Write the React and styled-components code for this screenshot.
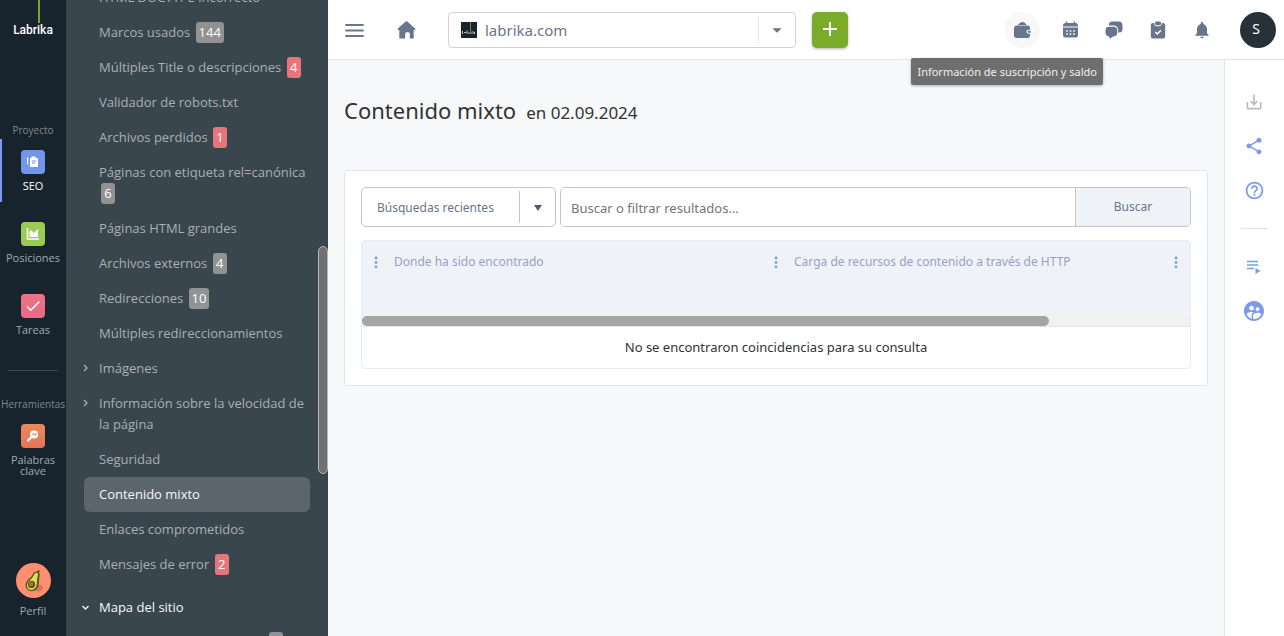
import React from "react";
import styled, { createGlobalStyle, css } from "styled-components";
import {
  MdSaveAlt,
  MdShare,
  MdHelpOutline,
  MdSupervisedUserCircle,
  MdNotifications,
  MdArrowDropDown,
  MdCheck,
} from "react-icons/md";

const Global = createGlobalStyle`
  *, *::before, *::after { box-sizing: border-box; }
  body {
    margin: 0;
    background: #f6f8fa;
    font-family: "Noto Sans", "Open Sans", sans-serif;
    font-size: 13px;
    color: #333;
  }
  button, input, select { font: inherit; margin: 0; }
  a { color: inherit; text-decoration: none; }
  svg { display: block; flex: none; }
`;

const Page = styled.div`
  display: grid;
  grid-template-columns: 66px 262px minmax(0, 1fr);
  min-height: 100vh;
`;

/* ---- project rail ---- */

const Rail = styled.nav`
  display: flex;
  flex-direction: column;
  height: 100vh;
  padding-bottom: 16px;
  background: #17242e;
  font-family: "Open Sans", "Noto Sans", sans-serif;
  font-size: 11px;
  color: #a3a9ae;
`;

const Logo = styled.a`
  display: flex;
  flex-direction: column;
  align-items: center;
  width: 42px;
  height: 43px;
  margin: 0 auto 78px;
  color: #fff;
  font: 500 12px/14px Roboto, sans-serif;
  &::before {
    content: "";
    width: 2px;
    height: 23px;
    margin-left: 12px;
    background: #7da628;
  }
`;

const RailHeading = styled.span`
  align-self: center;
  line-height: 18px;
  font-size: 10px;
  color: #84868a;
`;

const RailItem = styled.a`
  display: flex;
  flex-direction: column;
  align-items: center;
  gap: 6px;
  height: 63px;
  margin-bottom: 9px;
  padding-top: 11px;
  line-height: 11px;
  text-align: center;
  border-left: 2px solid transparent;
  border-right: 2px solid transparent;
  ${(p) => p.$active && css`
    color: #fff;
    border-left-color: #7b9bf0;
  `}
`;

const Tile = styled.span`
  display: flex;
  align-items: center;
  justify-content: center;
  width: 24px;
  height: 24px;
  border-radius: 4px;
  background: ${(p) => p.$fill};
  color: #fff;
`;

const RailRule = styled.hr`
  width: 50px;
  margin: 15px auto 24px;
  border: 0;
  border-top: 1px solid #43464d;
`;

const Profile = styled.a`
  display: flex;
  flex-direction: column;
  align-items: center;
  gap: 4px;
  margin-top: auto;
  line-height: 18px;
`;

/* ---- section menu ---- */

const Menu = styled.nav`
  display: flex;
  height: 100vh;
  overflow: hidden;
  background: #3a464e;
  font-family: "Open Sans", "Noto Sans", sans-serif;
  color: #a9afb2;
`;

const MenuList = styled.ul`
  flex: 1;
  margin: -20px 8px 0 18px;
  padding: 0;
  list-style: none;
`;

const MenuItem = styled.li`
  margin-top: ${(p) => (p.$group ? "8px" : "0")};
`;

const MenuLink = styled.a`
  display: grid;
  grid-template-columns: 15px minmax(0, 1fr);
  align-items: start;
  padding: 7px 0;
  line-height: 21px;
  border-radius: 6px;
  ${(p) => p.$bright && css`color: #f5f7f8;`}
  ${(p) => p.$active && css`
    color: #f5f7f8;
    background: #5a666b;
  `}
  & > svg { margin: 5px 0 0 -4px; }
`;

const Badge = styled.span`
  display: inline-block;
  min-width: 14px;
  height: 21px;
  margin-left: ${(p) => (p.$far ? "170px" : "2px")};
  padding: 0 3px;
  border-radius: 3px;
  vertical-align: top;
  text-align: center;
  background: ${(p) => (p.$alert ? "#e8757c" : "#919293")};
  color: #fff;
`;

const ScrollTrack = styled.div`
  width: 10px;
  padding-top: 246px;
  background: #3a464e;
`;

const ScrollThumb = styled.div`
  height: 228px;
  border: 1px solid #b7b4b8;
  border-radius: 5px;
  background: #707073;
`;

/* ---- top bar ---- */

const Workspace = styled.div`
  display: flex;
  flex-direction: column;
  min-width: 0;
`;

const TopBar = styled.header`
  display: flex;
  align-items: center;
  height: 60px;
  padding: 0 8px 0 16px;
  background: #fff;
  border-bottom: 1px solid #e4e1e8;
  color: #69758c;
`;

const PlainButton = styled.button`
  display: flex;
  align-items: center;
  justify-content: center;
  padding: 0;
  border: 0;
  background: none;
  color: inherit;
  cursor: pointer;
`;

const HomeLink = styled.a`
  margin: 0 32px;
`;

const SitePicker = styled.label`
  display: flex;
  align-items: center;
  gap: 8px;
  flex: 0 1 348px;
  height: 36px;
  padding-left: 12px;
  border: 1px solid #d3d1df;
  border-radius: 4px;
`;

const BareSelect = styled.select`
  appearance: none;
  flex: 1;
  min-width: 0;
  height: 100%;
  padding: 0;
  border: 0;
  outline: 0;
  background: none;
  color: #69758c;
  font-size: ${(p) => (p.$large ? "15px" : "12px")};
`;

const PickerArrow = styled.span`
  display: flex;
  align-items: center;
  justify-content: center;
  width: ${(p) => p.$width}px;
  height: ${(p) => p.$height}px;
  border-left: 1px solid ${(p) => p.$line};
  color: ${(p) => p.$ink};
`;

const AddButton = styled(PlainButton)`
  width: 36px;
  height: 36px;
  margin-left: 16px;
  border-radius: 5px;
  background: #7aab2b;
  color: #fff;
  box-shadow: 0 1px 3px rgba(0, 0, 0, 0.3);
`;

const Actions = styled.div`
  display: flex;
  align-items: center;
  gap: 8px;
  margin-left: auto;
`;

const ActionButton = styled(PlainButton)`
  width: 36px;
  height: 36px;
  border-radius: 50%;
  background: ${(p) => (p.$hovered ? "#f8f8f9" : "none")};
`;

const TipAnchor = styled.div`
  position: relative;
  margin-right: 4px;
`;

const Tooltip = styled.div`
  position: absolute;
  z-index: 2;
  top: 46px;
  right: -63px;
  padding: 0 6px;
  line-height: 27px;
  font-size: 11px;
  white-space: nowrap;
  border-radius: 2px;
  background: #6e6e6e;
  color: #eee;
  box-shadow: 0 1px 3px rgba(0, 0, 0, 0.3);
`;

const UserButton = styled(PlainButton)`
  width: 36px;
  height: 36px;
  margin-left: 12px;
  padding: 0 4px 2px 0;
  border-radius: 50%;
  background: #263238;
  color: #fff;
  font-size: 14px;
`;

/* ---- content ---- */

const Body = styled.div`
  display: flex;
  flex: 1;
`;

const Main = styled.main`
  flex: 1;
  min-width: 0;
  padding: 33px 16px 16px;
`;

const Title = styled.h1`
  margin: 0 0 43px;
  font-size: 22px;
  font-weight: 400;
  line-height: 34px;
`;

const TitleDate = styled.span`
  margin-left: 10px;
  font-size: 17px;
  line-height: 1;
`;

const Card = styled.section`
  display: grid;
  gap: 13px;
  padding: 16px;
  border: 1px solid #e6e2e8;
  border-radius: 3px;
  background: #fff;
`;

const Filters = styled.form`
  display: flex;
  gap: 4px;
  height: 40px;
`;

const Recent = styled.label`
  display: flex;
  align-items: center;
  width: 195px;
  padding-left: 15px;
  border: 1px solid #c3c4cc;
  border-radius: 5px;
`;

const SearchGroup = styled.div`
  display: flex;
  flex: 1;
  border: 1px solid #c3c4cc;
  border-radius: 5px;
  overflow: hidden;
`;

const SearchInput = styled.input`
  flex: 1;
  min-width: 0;
  padding: 2px 10px 0;
  border: 0;
  outline: 0;
  background: #fff;
  &::placeholder { color: #757575; opacity: 1; }
`;

const SearchButton = styled.button`
  width: 115px;
  padding-bottom: 3px;
  border: 0;
  border-left: 1px solid #c3c4cc;
  background: #eff3f7;
  color: #6b7590;
  font-size: 12px;
`;

const Results = styled.div`
  overflow: hidden;
  border: 1px solid #e3ecf7;
  border-radius: 4px;
`;

const TableScroll = styled.div`
  overflow: hidden;
  background: #eff3f7;
`;

const Table = styled.table`
  width: 1000px;
  table-layout: fixed;
  border-collapse: collapse;
`;

const HeadCell = styled.th`
  width: ${(p) => p.$width}px;
  height: 75px;
  padding: 12px 10px 0;
  vertical-align: top;
  text-align: left;
  font-weight: 400;
  font-size: 12px;
  line-height: 18px;
  color: #98a1bf;
`;

const HeadLabel = styled.div`
  display: flex;
  align-items: center;
  gap: 14px;
  min-height: 18px;
`;

const HScroll = styled.div`
  height: 11px;
  background: #f1f1f1;
  border-bottom: 1px solid #dfe3ea;
`;

const HThumb = styled.div`
  width: 83%;
  height: 10px;
  border-radius: 5px;
  background: #a5a5a5;
`;

const Empty = styled.p`
  margin: 0;
  line-height: 41px;
  text-align: center;
`;

const Tools = styled.aside`
  display: flex;
  flex-direction: column;
  align-items: center;
  gap: 20px;
  width: 60px;
  padding: 30px 1px 0 0;
  background: #fff;
  border-left: 1px solid #e4e1e8;
  color: #7b9bea;
`;

const ToolButton = styled(PlainButton)`
  width: 24px;
  height: 24px;
  color: ${(p) => (p.$muted ? "#bcbcbc" : "inherit")};
`;

const ToolRule = styled.hr`
  width: 27px;
  margin: 6px 0;
  border: 0;
  border-top: 1px solid #e3e3e6;
`;

/* ---- drawings ---- */

const SeoIcon = () => (
  <svg width="14" height="14" viewBox="0 0 14 14" fill="none">
    <path d="M1 2.500 2.200 2v9L1 8Z" fill="#fff" />
    <path d="M4 3h1.500V1.500h4V3H12v9H4Z" fill="#fff" />
    <path d="M6 6h4M6 8h3" stroke="#7396e8" />
  </svg>
);

const ChartIcon = () => (
  <svg width="14" height="14" viewBox="0 0 14 14">
    <path d="M1.500 1v11h11.500" fill="none" stroke="#fff" strokeWidth="1.600" />
    <path d="M3.500 10V4.500L5 3l3 3 4-4v8Z" fill="#fff" />
  </svg>
);

const KeyIcon = () => (
  <svg width="14" height="14" viewBox="0 0 14 14" fill="none">
    <circle cx="8" cy="5.500" r="4" fill="#fff" />
    <path d="M5.500 8 2 11.500" stroke="#fff" strokeWidth="2.400" strokeLinecap="round" />
    <path d="m6 6.500 1.500-2L9 6.500 10.500 4" stroke="#e57a58" />
  </svg>
);

const Avocado = () => (
  <svg width="35" height="35" viewBox="0 0 35 35">
    <circle cx="17.500" cy="17.500" r="17.500" fill="#ff8f70" />
    <ellipse cx="22" cy="25" rx="5" ry="3.500" fill="#dd7460" />
    <path d="M22 8.500c2.500 1 1.700 4.500 1.200 7-.5 3 .2 5-1.200 8.500-1.700 4-6.500 5.600-9.800 3.300-3.300-2.300-3.400-6.800-1-9.800 2-2.400 3.800-2.800 5-5.200 1-2 2.700-4.800 5.800-3.800Z" fill="#4c5f1c" />
    <path d="M21 9.800c1.500.8.700 3.600.2 6-.5 2.800.2 4.700-1 7.700-1.400 3.200-5 4.300-7.300 2.700-2.500-1.800-2.500-5.200-.5-7.700 1.900-2.200 3.700-2.800 4.900-5.300.9-1.900 2-4.200 3.700-3.400Z" fill="#dfdf55" />
    <circle cx="15.500" cy="21.500" r="3.700" fill="#7a4a22" />
    <circle cx="15" cy="21" r="2.200" fill="#a87339" />
    <path d="m21.500 9 2-1.500" stroke="#7a3522" strokeWidth="1.500" />
  </svg>
);

const Chevron = ({ open }) => (
  <svg width="10" height="10" viewBox="0 0 10 10" fill="none" stroke="currentColor" strokeWidth="1.300">
    <path d={open ? "m2.500 4 3 3 3-3" : "m4 2 3 3-3 3"} />
  </svg>
);

const BarsIcon = () => (
  <svg width="20" height="14" viewBox="0 0 20 14" stroke="currentColor" strokeWidth="1.800" strokeLinecap="round">
    <path d="M2 2h17M2 7.500h17M2 13h17" />
  </svg>
);

const HomeIcon = () => (
  <svg width="20" height="20" viewBox="0 0 20 20" fill="currentColor">
    <path d="M9.700 1.500a1.200 1.200 0 0 1 1.600 0l7.800 7a.9.900 0 0 1-.6 1.600h-.8v7.400c0 .6-.4 1-1 1h-2.900v-4.700c0-1-.8-1.600-1.700-1.600h-1.200c-1 0-1.700.7-1.700 1.600v4.700H4.300c-.6 0-1-.4-1-1v-7.400h-.8a.9.900 0 0 1-.6-1.600Z" />
  </svg>
);

const SiteIcon = () => (
  <svg width="16" height="16" viewBox="0 0 16 16">
    <rect width="16" height="16" fill="#17242e" />
    <path d="M9.500 0v9" stroke="#6c9422" />
    <path d="M1.500 9v3M3 10.500h2M6 8.500v3.500M8 10v2M10 9.500V12M12 9v3M13.500 10v2" stroke="#b9c0c3" />
  </svg>
);

const PlusIcon = () => (
  <svg width="16" height="16" viewBox="0 0 16 16" stroke="currentColor" strokeWidth="2">
    <path d="M8 0v14M1 7h14" />
  </svg>
);

const WalletIcon = () => (
  <svg width="20" height="20" viewBox="0 0 20 20" fill="currentColor">
    <path d="M6 5 C6.500 3.500 8.500 2 10.500 2S14 3.500 14.500 5Z" />
    <path d="M5 5.500h10.500a2.500 2.500 0 0 1 2.500 2.500v1.800h-1.600a2 2 0 0 0 0 4H18v1.700a2.500 2.500 0 0 1-2.500 2.500h-11A2.500 2.500 0 0 1 2 15.500v-7a3 3 0 0 1 3-3Z" />
    <path d="M16.600 10.800h2v2h-2a1 1 0 0 1 0-2Z" />
  </svg>
);

const CalendarIcon = () => (
  <svg width="20" height="20" viewBox="0 0 20 20" fill="currentColor">
    <path d="M6.500 1.500v3M14.500 1.500v3" stroke="currentColor" strokeWidth="1.500" />
    <path d="M5.500 3h10A2.500 2.500 0 0 1 18 5.500v1H3v-1A2.500 2.500 0 0 1 5.500 3Z" />
    <path d="M3 7.500h15v7.500a2.500 2.500 0 0 1-2.500 2.500h-10A2.500 2.500 0 0 1 3 15Z" />
    <path d="M6.200 11h1.600M9.700 11h1.600M13.200 11h1.600M6.200 14h1.600M9.700 14h1.600M13.200 14h1.600" stroke="#fff" strokeWidth="1.500" />
  </svg>
);

const ChatIcon = () => (
  <svg width="20" height="20" viewBox="0 0 20 20" fill="currentColor">
    <path d="M8 1.500h6.500a4 4 0 0 1 4 4V9a3.500 3.500 0 0 1-3.600 3.500h-.7V10a4.500 4.500 0 0 0-4.500-4.500H4.700c.2-2.600 1.300-4 3.300-4Z" />
    <path d="M5 6.800h4.500a3.800 3.800 0 0 1 3.800 3.800v2a3.800 3.800 0 0 1-3.800 3.800H9L6 18.800l-1-2.400a3.800 3.800 0 0 1-3.500-3.800v-2A3.600 3.600 0 0 1 5 6.800Z" />
  </svg>
);

const ClipboardIcon = () => (
  <svg width="20" height="20" viewBox="0 0 20 20">
    <path d="M5 3h1.200c0 2.400 1 3.300 2.600 3.300h2.400c1.600 0 2.600-.9 2.600-3.300H15a2.200 2.200 0 0 1 2.200 2.200v11A2.300 2.300 0 0 1 15 18.500H5a2.300 2.300 0 0 1-2.200-2.300v-11A2.200 2.200 0 0 1 5 3Z" fill="currentColor" />
    <rect x="7" y="1.500" width="6" height="3.800" rx="1.500" fill="currentColor" />
    <path d="m7.300 12 2 2 3.600-3.700" fill="none" stroke="#fff" strokeWidth="1.500" />
  </svg>
);

const QueueIcon = () => (
  <svg width="16" height="16" viewBox="0 0 16 16" fill="currentColor">
    <path d="M1 2.500h11M1 6h11M1 9.500h7" stroke="currentColor" strokeWidth="1.600" />
    <path d="m9.500 9 5 3-5 3Z" />
  </svg>
);

const Dots = () => (
  <svg width="8" height="14" viewBox="0 0 8 14" fill="#7b9bea">
    <circle cx="4" cy="3" r="1.400" />
    <circle cx="4" cy="7.500" r="1.400" />
    <circle cx="4" cy="12" r="1.400" />
  </svg>
);

const menuItems = [
  { label: "HTML DOCTYPE incorrecto" },
  { label: "Marcos usados", count: 144 },
  { label: "Múltiples Title o descripciones", count: 4, alert: true },
  { label: "Validador de robots.txt" },
  { label: "Archivos perdidos", count: 1, alert: true },
  { label: "Páginas con etiqueta rel=canónica", count: 6 },
  { label: "Páginas HTML grandes" },
  { label: "Archivos externos", count: 4 },
  { label: "Redirecciones", count: 10 },
  { label: "Múltiples redireccionamientos" },
  { label: "Imágenes", branch: true },
  { label: "Información sobre la velocidad de la página", branch: true },
  { label: "Seguridad" },
  { label: "Contenido mixto", active: true },
  { label: "Enlaces comprometidos" },
  { label: "Mensajes de error", count: 2, alert: true },
  { label: "Mapa del sitio", branch: true, open: true },
];

export default function App() {
  return (
    <>
      <Global />
      <Page>
        <Rail>
          <Logo href="#">Labrika</Logo>
          <RailHeading>Proyecto</RailHeading>
          <RailItem href="#" $active>
            <Tile $fill="#7396e8"><SeoIcon /></Tile>
            SEO
          </RailItem>
          <RailItem href="#">
            <Tile $fill="#9acb57"><ChartIcon /></Tile>
            Posiciones
          </RailItem>
          <RailItem href="#">
            <Tile $fill="linear-gradient(#ea7380, #e96a88)"><MdCheck size={18} /></Tile>
            Tareas
          </RailItem>
          <RailRule />
          <RailHeading>Herramientas</RailHeading>
          <RailItem href="#">
            <Tile $fill="linear-gradient(#ea8a5c, #e47458)"><KeyIcon /></Tile>
            Palabras clave
          </RailItem>
          <Profile href="#">
            <Avocado />
            Perfil
          </Profile>
        </Rail>

        <Menu>
          <MenuList>
            {menuItems.map((item) => (
              <MenuItem key={item.label} $group={item.open}>
                <MenuLink href="#" $active={item.active} $bright={item.open}>
                  {item.branch ? <Chevron open={item.open} /> : <span />}
                  <span>
                    {item.label}{" "}
                    {item.count && <Badge $alert={item.alert}>{item.count}</Badge>}
                  </span>
                </MenuLink>
              </MenuItem>
            ))}
            <MenuItem>
              <MenuLink href="#">
                <span />
                <span><Badge $far /></span>
              </MenuLink>
            </MenuItem>
          </MenuList>
          <ScrollTrack><ScrollThumb /></ScrollTrack>
        </Menu>

        <Workspace>
          <TopBar>
            <PlainButton aria-label="Menú"><BarsIcon /></PlainButton>
            <HomeLink href="#" aria-label="Inicio"><HomeIcon /></HomeLink>
            <SitePicker>
              <SiteIcon />
              <BareSelect $large aria-label="Sitio">
                <option>labrika.com</option>
              </BareSelect>
              <PickerArrow $width={37} $height={26} $line="#e2e2e8" $ink="#707070">
                <MdArrowDropDown size={22} />
              </PickerArrow>
            </SitePicker>
            <AddButton aria-label="Añadir"><PlusIcon /></AddButton>
            <Actions>
              <TipAnchor>
                <ActionButton $hovered aria-label="Saldo" aria-describedby="balance-tip">
                  <WalletIcon />
                </ActionButton>
                <Tooltip id="balance-tip" role="tooltip">Información de suscripción y saldo</Tooltip>
              </TipAnchor>
              <ActionButton aria-label="Calendario"><CalendarIcon /></ActionButton>
              <ActionButton aria-label="Mensajes"><ChatIcon /></ActionButton>
              <ActionButton aria-label="Tareas"><ClipboardIcon /></ActionButton>
              <ActionButton aria-label="Notificaciones"><MdNotifications size={20} /></ActionButton>
              <UserButton aria-label="Cuenta">S</UserButton>
            </Actions>
          </TopBar>

          <Body>
            <Main>
              <Title>
                Contenido mixto<TitleDate>en 02.09.2024</TitleDate>
              </Title>
              <Card>
                <Filters>
                  <Recent>
                    <BareSelect aria-label="Búsquedas recientes">
                      <option>Búsquedas recientes</option>
                    </BareSelect>
                    <PickerArrow $width={36} $height={32} $line="#c3c4cc" $ink="#4e5878">
                      <svg width="10" height="7" viewBox="0 0 10 7" fill="currentColor">
                        <path d="M1 1h8L5 7Z" />
                      </svg>
                    </PickerArrow>
                  </Recent>
                  <SearchGroup>
                    <SearchInput aria-label="Buscar o filtrar" placeholder="Buscar o filtrar resultados..." />
                    <SearchButton type="button">Buscar</SearchButton>
                  </SearchGroup>
                </Filters>
                <Results>
                  <TableScroll>
                    <Table>
                      <thead>
                        <tr>
                          <HeadCell $width={400}><HeadLabel><Dots />Donde ha sido encontrado</HeadLabel></HeadCell>
                          <HeadCell $width={400}><HeadLabel><Dots />Carga de recursos de contenido a través de HTTP</HeadLabel></HeadCell>
                          <HeadCell $width={200}><HeadLabel><Dots /></HeadLabel></HeadCell>
                        </tr>
                      </thead>
                    </Table>
                    <HScroll><HThumb /></HScroll>
                  </TableScroll>
                  <Empty>No se encontraron coincidencias para su consulta</Empty>
                </Results>
              </Card>
            </Main>
            <Tools>
              <ToolButton $muted aria-label="Descargar"><MdSaveAlt size={20} /></ToolButton>
              <ToolButton aria-label="Compartir"><MdShare size={20} /></ToolButton>
              <ToolButton aria-label="Ayuda"><MdHelpOutline size={21} /></ToolButton>
              <ToolRule />
              <ToolButton aria-label="Lista"><QueueIcon /></ToolButton>
              <ToolButton aria-label="Usuarios"><MdSupervisedUserCircle size={24} /></ToolButton>
            </Tools>
          </Body>
        </Workspace>
      </Page>
    </>
  );
}
